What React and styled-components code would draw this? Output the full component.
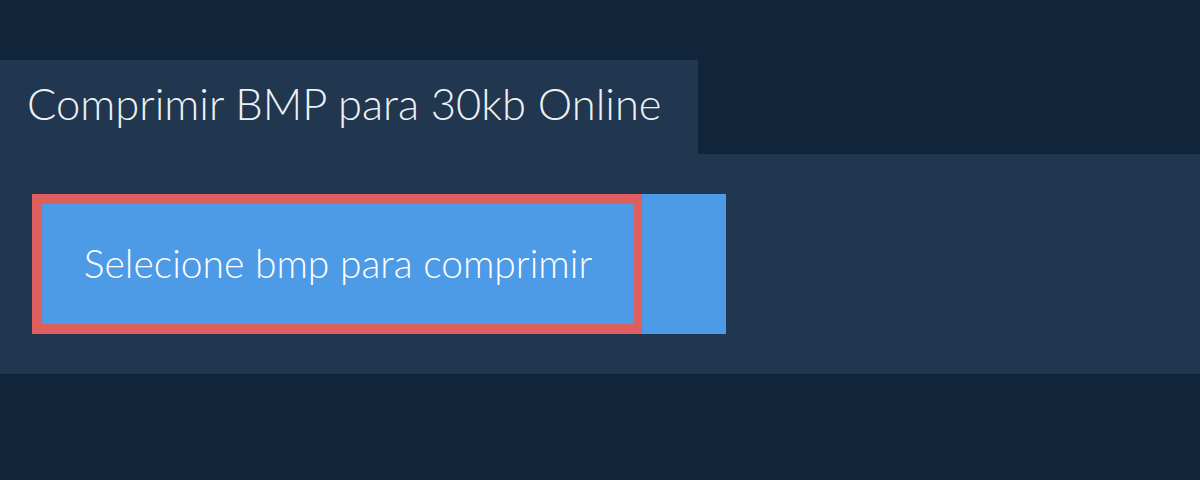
import React from 'react'
import styled, { createGlobalStyle } from 'styled-components'

const Global = createGlobalStyle`
  body{
    margin:0;
    background:#10243a;
    font-family: Lato, "Open Sans", sans-serif;
  }
`

const Page = styled.div`
  padding-top:60px;
  height:480px;
  box-sizing:border-box;
`

const Tab = styled.div`
  width:698px;
  height:94px;
  background:#21364f;
  display:flex;
  align-items:center;
  padding:0 0 8px 27px;
  box-sizing:border-box;
  h1{
    margin:0;
    font-size:43.5px;
    font-weight:300;
    color:#eef1f4;
    white-space:nowrap;
  }
`

const Panel = styled.div`
  background:#21364f;
  padding:40px 32px;
  display:flex;
`

const Upload = styled.div`
  display:flex;
  height:140px;
  background:#4d9ae6;
`

const Pick = styled.button`
  width:610px;
  height:140px;
  box-sizing:border-box;
  border:10px solid #df5e5e;
  border-right-width:8px;
  background:#4d9ae6;
  color:#ffffff;
  font-family: Lato, "Open Sans", sans-serif;
  font-size:39px;
  font-weight:300;
  padding:0 0 2px;
  cursor:pointer;
`

const Arrow = styled.div`
  width:84px;
`

export default function App() {
  return (
    <Page>
      <Global />
      <Tab>
        <h1>Comprimir BMP para 30kb Online</h1>
      </Tab>
      <Panel>
        <Upload>
          <Pick>Selecione bmp para comprimir</Pick>
          <Arrow />
        </Upload>
      </Panel>
    </Page>
  )
}
